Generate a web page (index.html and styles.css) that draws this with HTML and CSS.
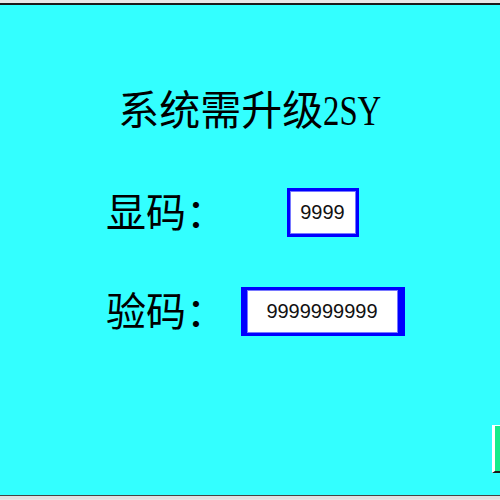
FILE: index.html
```html
<!DOCTYPE html>
<html>
<head>
<meta charset="utf-8">
<link rel="stylesheet" href="styles.css">
</head>
<body>
<div class="topbar"></div>
<main class="screen">
  <h1 class="title">系统需升级<span class="latin">2SY</span></h1>
  <div class="form">
    <div class="label">显码：</div>
    <div class="cell"><div class="box box-small">9999</div></div>
    <div class="label">验码：</div>
    <div class="cell"><div class="box box-wide">9999999999</div></div>
  </div>
  <div class="side-btn"></div>
</main>
<div class="bottombar"></div>
</body>
</html>
```

FILE: styles.css
```css
html, body {
  margin: 0;
  padding: 0;
  width: 500px;
  height: 500px;
  overflow: hidden;
  background: #e6e6e6;
}

.topbar {
  height: 3px;
  background: #e6e6e6;
  border-bottom: 2px solid #1a1a1a;
}

.screen {
  position: relative;
  height: 491px;
  background: #33ffff;
  border-bottom: 1px solid #444;
  padding-top: 80px;
  box-sizing: border-box;
}

.bottombar {
  height: 3px;
  background: #e0e0e0;
}

.title {
  margin: 0;
  font-family: "Noto Sans CJK SC", serif;
  font-weight: normal;
  font-size: 41px;
  line-height: 44px;
  text-align: center;
  color: #000;
  white-space: nowrap;
}

.latin {
  display: inline-block;
  font-family: "Liberation Serif", serif;
  font-size: 42px;
  transform: scaleX(0.78);
  transform-origin: left center;
  margin-right: -16px;
}

.form {
  display: grid;
  grid-template-columns: 120px 193px;
  grid-auto-rows: 49px;
  row-gap: 50px;
  align-items: center;
  padding-left: 106px;
  margin-top: 55px;
}

.label {
  font-family: "Noto Sans CJK SC", serif;
  font-size: 40px;
  line-height: 42px;
  padding-bottom: 5px;
  color: #000;
  white-space: nowrap;
}

.cell {
  display: flex;
  justify-content: center;
}

.box {
  height: 49px;
  box-sizing: border-box;
  background: #fff;
  border: 3px solid #0000ff;
  box-shadow: inset 0 0 0 1px #7878ff;
  display: flex;
  align-items: center;
  justify-content: center;
  font-family: "Liberation Sans", sans-serif;
  font-size: 20px;
  color: #111;
}

.box-small {
  width: 72px;
}

.box-wide {
  width: 164px;
  border-left-width: 6px;
  border-right-width: 7px;
}

.side-btn {
  position: absolute;
  left: 492px;
  top: 420px;
  width: 20px;
  height: 48px;
  box-sizing: border-box;
  background: #14ec8a;
  border-left: 3px solid #ffffff;
  border-top: 1px solid #ffffff;
  border-bottom: 2px solid #1a1a1a;
}
```
